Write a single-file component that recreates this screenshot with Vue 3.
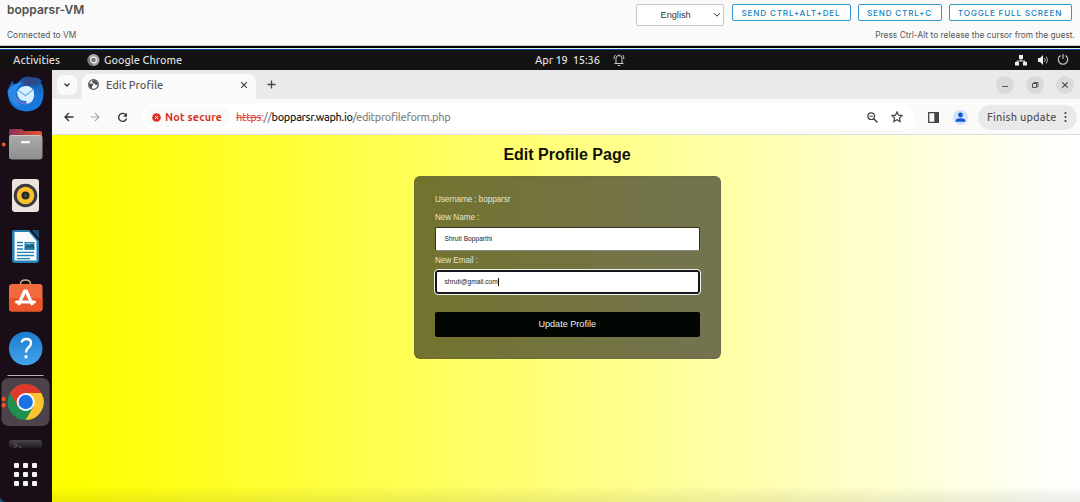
<script setup>
import { ref } from 'vue'

const username = 'bopparsr'
const name = ref('Shruti Bopparthi')
const email = ref('shruti@gmail.com')
const dots = [0, 1, 2, 3, 4, 5, 6, 7, 8]
</script>

<template>
  <div class="screen">
    <header class="vm">
      <div class="vm-left">
        <h1>bopparsr-VM</h1>
        <p><span>Connected to VM</span></p>
      </div>
      <div class="vm-right">
        <div class="vm-actions">
          <div class="select">
            <span>English</span>
            <svg width="8" height="6" viewBox="0 0 8 6"><path d="M1 1.2l3 3 3-3" fill="none" stroke="#333" /></svg>
          </div>
          <button class="b1"><span>SEND CTRL+ALT+DEL</span></button>
          <button class="b2"><span>SEND CTRL+C</span></button>
          <button class="b3"><span>TOGGLE FULL SCREEN</span></button>
        </div>
        <p class="hint">Press Ctrl-Alt to release the cursor from the guest.</p>
      </div>
    </header>
    <div class="rule"></div>

    <div class="topbar">
      <span class="activities">Activities</span>
      <svg class="tb-chrome" width="13" height="13" viewBox="0 0 13 13">
        <circle cx="6.5" cy="6" r="6" fill="#aaa" />
        <path d="M6.5 6L1.3 3A6 6 0 0 0 6 12z" fill="#777" />
        <circle cx="6.5" cy="6" r="2.9" fill="#777" stroke="#eee" stroke-width="1.1" />
      </svg>
      <span class="app">Google Chrome</span>
      <span class="clock">Apr 19&nbsp; 15:36</span>
      <svg class="bell" width="12" height="13" viewBox="0 0 12 13" fill="none" stroke="#ccc">
        <path d="M1.5 9.500h9M3 9.200V4.500a3 3 0 0 1 6 0v4.700M6 .5v1M4.800 11.500h2.400M1.200 5Q.8 2.500 2.400 .9M10.800 5Q11.200 2.500 9.600 .9" />
      </svg>
      <svg class="net" width="12" height="11" viewBox="0 0 12 11">
        <path d="M6 3v3M2 8V6h8v2" fill="none" stroke="#eee" />
        <path d="M4 0h4v4H4zM0 7h4v3.5H0zM8 7h4v3.5H8z" fill="#eee" />
      </svg>
      <svg class="vol" width="12" height="12" viewBox="0 0 12 12">
        <path d="M1 4h2l3-3v10L3 8H1z" fill="#eee" />
        <path d="M7.5 4q1.4 2 0 4M9.3 2.5q2.4 3.5 0 7" fill="none" stroke="#aaa" />
      </svg>
      <svg class="power" width="12" height="12" viewBox="0 0 12 12" fill="none" stroke="#ccc" stroke-width="1.1">
        <path d="M3.6 1.500a4.700 4.700 0 1 0 4.800 0M6 0v5" />
      </svg>
    </div>

    <div class="desktop">
      <aside class="dock">
        <svg width="52" height="432" viewBox="0 70 52 432">
          <defs>
            <linearGradient id="bird" x1="0" y1="0" x2="0" y2="1"><stop offset="0" stop-color="#174e96" /><stop offset=".55" stop-color="#1878d8" /><stop offset="1" stop-color="#1977df" /></linearGradient>
            <linearGradient id="tab" x1="0" y1="0" x2="1" y2="0"><stop offset="0" stop-color="#872f5b" /><stop offset="1" stop-color="#ec5428" /></linearGradient>
            <linearGradient id="folder" x1="0" y1="0" x2="0" y2="1"><stop offset="0" stop-color="#ababab" /><stop offset="1" stop-color="#8e8e8e" /></linearGradient>
            <linearGradient id="help" x1="0" y1="0" x2="0" y2="1"><stop offset="0" stop-color="#1b7dce" /><stop offset="1" stop-color="#43a4ea" /></linearGradient>
            <linearGradient id="term" x1="0" y1="0" x2="0" y2="1"><stop offset="0" stop-color="#494548" /><stop offset="1" stop-color="#211920" /></linearGradient>
          </defs>
          <!-- mail -->
          <path d="M7.500 91Q9 86 12.500 80.500Q13 85 17 84Q21 77 27 76.500L34 77.500Q39 77 42 81L40.500 82Q44 87 43.500 94Q43 111 26 111.500Q8 110 7.500 91z" fill="url(#bird)" />
          <path d="M8 91Q12 83 23 82L18 87Q12 98 21 107Q8 102 8 91z" fill="#2b8ae8" />
          <path d="M22 82Q25 76 34 78Q40 80 38 84L27 86z" fill="#324886" />
          <path d="M17 92Q20 85 28 86Q35 88 34 96Q33 104 25 104L27 101Q18 102 17 92z" fill="#d9efff" />
          <path d="M18 90l7.500 5.500 8-6" fill="none" stroke="#73b7ec" stroke-width="1.500" />
          <path d="M15 96Q17 103 27 104" fill="none" stroke="#806ed0" stroke-width="1.500" />
          <!-- files -->
          <path d="M9 131q0-2 2-2h10q2 0 3 2h16q2 0 2 2v12H9z" fill="url(#tab)" />
          <rect x="9" y="135" width="33.500" height="24.500" rx="3" fill="url(#folder)" />
          <path d="M10.500 135.500h30" stroke="#d9d9d9" stroke-width=".7" />
          <rect x="21" y="141" width="9" height="2.300" rx=".6" fill="#f7f7f7" />
          <circle cx="3.700" cy="144.500" r="2" fill="#e95420" />
          <!-- music -->
          <rect x="12" y="179" width="27" height="33" rx="3" fill="#e9e4dd" />
          <circle cx="25.500" cy="195.500" r="11.800" fill="#3a3b3e" />
          <circle cx="25.500" cy="195.500" r="8.800" fill="#fbc02c" />
          <circle cx="25.500" cy="195.500" r="4" fill="#292a2c" />
          <circle cx="25.500" cy="195.500" r="1.200" fill="#5b5b5b" />
          <!-- writer -->
          <path d="M14 230h15l10 11v19q0 3-3 3H15q-3 0-3-3v-28q0-2 2-2z" fill="#2580b5" />
          <path d="M14.500 232H29l7.500 9v19.500h-22z" fill="#f8fbfd" />
          <path d="M31.500 230h7.500v8.500z" fill="#174e70" />
          <path d="M17 242.500h6M17 245.700h6M17 249h6M17 252.300h17M17 255.500h17M17 258.600h13" stroke="#247fb4" stroke-width="1.300" />
          <path d="M24.500 242h10v8h-10z" fill="#277ea7" />
          <path d="M25 248.500l3-3 2 2 2-3 2 4" fill="none" stroke="#0d3c59" />
          <path d="M25.500 243h8v1h-8z" fill="#8fc7e4" />
          <!-- software -->
          <path d="M20.500 286v-2q0-4 5-4t5 4v2" fill="none" stroke="#c8aa83" stroke-width="1.500" />
          <rect x="9" y="284" width="33.500" height="27.500" rx="3" fill="#f06a3e" />
          <path d="M9 298h33.500v10.500q0 3-3 3H12q-3 0-3-3z" fill="#ea5529" />
          <path d="M18.500 305l6.200-14h1.600l6.200 14" fill="none" stroke="#fff" stroke-width="3.200" stroke-linejoin="round" />
          <path d="M16.500 302h18" stroke="#fff" stroke-width="3" stroke-linecap="round" />
          <!-- help -->
          <circle cx="25.700" cy="348.500" r="16.800" fill="url(#help)" />
          <path d="M21.500 342.500q1-3.500 5-3.500 4.500 0 4.500 4 0 2.500-2.500 4.500-2.500 2-2.500 5" fill="none" stroke="#fff" stroke-width="2.300" />
          <circle cx="26" cy="356.700" r="1.700" fill="#fff" />
          <path d="M7.500 375.500h36" stroke="#b8b4b7" stroke-width="1.200" />
          <!-- browser -->
          <rect x="1.500" y="378" width="48" height="48" rx="7" fill="#4b4349" />
          <circle cx="3.700" cy="399" r="2.200" fill="#e95420" /><circle cx="3.700" cy="405.300" r="2.200" fill="#e95420" />
          <circle cx="25.700" cy="402" r="18" fill="#1e9150" />
          <path d="M25.700 402L10.100 393A18 18 0 0 1 41.300 393z" fill="#df382c" />
          <path d="M25.700 393H41.300A18 18 0 0 1 25.700 420L33.500 406.500z" fill="#fcc42f" />
          <path d="M10.100 393L17.900 406.500 25.700 393z" fill="#df382c" />
          <circle cx="25.700" cy="402" r="9" fill="#fff" />
          <circle cx="25.700" cy="402" r="7.200" fill="#1b72e5" />
          <!-- terminal -->
          <path d="M9 448v-5q0-3 3-3h27q3 0 3 3v5z" fill="url(#term)" />
          <path d="M14 443.500l3.500 2-3.500 2M19 447h2.500" fill="none" stroke="#77717a" stroke-width=".8" />
          <rect v-for="d in dots" :key="d" :x="14 + (d % 3) * 9" :y="463 + Math.floor(d / 3) * 9" width="5" height="5" rx="1" fill="#f4f4f4" />
          <path d="M0 497q1 4 5 5H0z" fill="#17567c" />
        </svg>
      </aside>

      <main class="browser">
        <div class="tabs">
          <span class="menu"><svg width="8" height="6" viewBox="0 0 8 6"><path d="M1.500 1.500L4 4l2.500-2.500" fill="none" stroke="#333" stroke-width="1.300" /></svg></span>
          <div class="tab">
            <svg width="11" height="11" viewBox="0 0 11 11">
              <circle cx="5.500" cy="5.500" r="4.800" fill="#fff" stroke="#50545a" stroke-width="1.300" />
              <path d="M1 4.500h3l1.500 1.300L4 7.500v2.700Q1 8.500 1 4.500zM5 1q4-.2 5 4L8 6.500 6.500 4.500H5L4 3z" fill="#50545a" />
            </svg>
            <span>Edit Profile</span>
            <svg class="close" width="8" height="8" viewBox="0 0 8 8"><path d="M1.200 1.200l5.600 5.600M6.800 1.200L1.200 6.800" stroke="#444" stroke-width="1.200" /></svg>
          </div>
          <svg class="plus" width="9" height="9" viewBox="0 0 9 9"><path d="M4.500.5v8M.5 4.500h8" stroke="#444" stroke-width="1.300" /></svg>
          <div class="winctl">
            <i><svg width="8" height="8" viewBox="0 0 8 8"><path d="M1 5.500h6" stroke="#555" /></svg></i>
            <i><svg width="8" height="8" viewBox="0 0 8 8"><path d="M1.500 2.500h4v4h-4zM3 2.500v-1h4v4H5.500" fill="none" stroke="#555" /></svg></i>
            <i><svg width="8" height="8" viewBox="0 0 8 8"><path d="M1.300 1.300l5.400 5.400M6.700 1.300L1.300 6.700" stroke="#444" stroke-width="1.100" /></svg></i>
          </div>
        </div>

        <div class="toolbar">
          <svg class="back" width="10" height="10" viewBox="0 0 10 10" fill="none" stroke="#333" stroke-width="1.300"><path d="M9.500 5H1.300M5 1L1 5l4 4" /></svg>
          <svg class="fwd" width="10" height="10" viewBox="0 0 10 10" fill="none" stroke="#aaa" stroke-width="1.200"><path d="M.5 5h8.200M5 1l4 4-4 4" /></svg>
          <svg class="reload" width="11" height="11" viewBox="0 0 11 11"><path d="M9.200 3.500A4 4 0 1 0 9.500 6.500" fill="none" stroke="#333" stroke-width="1.400" /><path d="M10 .8v4H6z" fill="#333" /></svg>
          <div class="address">
            <div class="chip">
              <svg width="9" height="9" viewBox="0 0 9 9"><circle cx="4.500" cy="4.500" r="4.300" fill="#d93025" /><path d="M3 3l3 3M6 3L3 6" stroke="#fff" /></svg>
              <span>Not secure</span>
            </div>
            <div class="url"><s>https</s><span class="dim">://</span><span class="host">bopparsr.waph.io</span><span class="path">/editprofileform.php</span></div>
            <svg class="mag" width="11" height="11" viewBox="0 0 11 11" fill="none" stroke="#444"><circle cx="4.200" cy="4.200" r="3.300" stroke-width="1.200" /><path d="M6.700 6.700l3.800 3.800" stroke-width="1.500" /><path d="M2.500 4.200h3.400" /></svg>
            <svg class="star" width="12" height="12" viewBox="0 0 12 12"><path d="M6 .9l1.500 3.300 3.600.4-2.700 2.400.8 3.600L6 8.800l-3.200 1.800.8-3.600L.9 4.600l3.600-.4z" fill="none" stroke="#444" stroke-width="1.200" /></svg>
          </div>
          <svg class="panel" width="11" height="11" viewBox="0 0 11 11"><path d="M.7.7h9.600v9.600H.7z" fill="none" stroke="#444" stroke-width="1.300" /><path d="M6.300 1h4v9h-4z" fill="#444" /></svg>
          <svg class="avatar" width="15" height="15" viewBox="0 0 15 15"><circle cx="7.500" cy="7.500" r="7.500" fill="#d3e3fd" /><circle cx="7.500" cy="5" r="2.400" fill="#1557ce" /><path d="M2.700 11.700V10.500Q3 8.200 7.500 8.200T12.300 10.500v1.200z" fill="#1557ce" /></svg>
          <div class="finish"><span>Finish update</span><svg width="3" height="12" viewBox="0 0 3 12" fill="#444"><circle cx="1.500" cy="2" r="1.100" /><circle cx="1.500" cy="6" r="1.100" /><circle cx="1.500" cy="10" r="1.100" /></svg></div>
        </div>

        <section class="page">
          <h2><span>Edit Profile Page</span></h2>
          <form class="card" @submit.prevent>
            <p class="user">Username : {{ username }}</p>
            <label class="l1">New Name :</label>
            <div class="field">{{ name }}</div>
            <label class="l2">New Email :</label>
            <div class="field focus">{{ email }}<i class="caret"></i></div>
            <button class="submit">Update Profile</button>
          </form>
        </section>
      </main>
    </div>
  </div>
</template>

<style>
body { overflow: hidden; }
</style>

<style scoped>
* { box-sizing: border-box; }
svg { display: block; flex: none; }
h1, h2, p { margin: 0; }
span, p, label { white-space: nowrap; }
.screen { width: 1080px; height: 502px; overflow: hidden; display: flex; flex-direction: column; font-family: Ubuntu, "Noto Sans", sans-serif; }
.vm { height: 46px; flex: none; background: #fafafa; border-bottom: 1px solid #ccc; display: flex; justify-content: space-between; font-family: Metropolis, Inter, sans-serif; color: #555; }
.vm-left { padding: 2px 0 0 7px; }
.vm-left h1 { font-size: 12px; line-height: 15px; font-weight: 600; color: #505050; letter-spacing: 0; }
.vm-left p { font-size: 8.300px; line-height: 12px; margin-top: 12px; letter-spacing: .06px; }
.vm-right { padding-right: 5px; }
.vm-actions { display: flex; height: 28px; padding: 4px 4px 0 0; justify-content: flex-end; }
.select { width: 88px; height: 22px; margin-right: 8px; border: 1px solid #c8c8c8; border-radius: 2px; background: #fff; display: flex; align-items: center; justify-content: space-between; padding: 0 2px 0 24px; font-size: 9.200px; color: #333; font-family: "Liberation Sans", sans-serif; }
.vm-actions button { height: 17px; padding: 0; border: 1px solid #3597cb; border-radius: 2px; background: #fff; color: #1682bd; font-family: Metropolis, Inter, sans-serif; font-size: 8.200px; line-height: 16px; font-weight: 500; letter-spacing: .78px; }
.vm-actions .b1 { width: 119px; margin-right: 7px; }
.vm-actions .b2 { width: 84px; margin-right: 7px; }
.vm-actions .b3 { width: 123px; margin-right: -.5px; }
.hint { text-align: right; font-size: 8.300px; line-height: 12px; margin-top: 1px; letter-spacing: .04px; }
.rule { height: 4px; flex: none; background: linear-gradient(#000 0 2px, #e6efec 2px 3px, #0749a9 3px 4px); }
.topbar { height: 20px; flex: none; background: #131313; color: #dedede; display: flex; align-items: center; padding: 0 11px 0 13px; font-size: 11px; line-height: 20px; font-weight: 500; }
.activities { width: 74px; letter-spacing: .02px; }
.tb-chrome { margin-right: 4px; }
.app { width: 431px; letter-spacing: -.02px; }
.clock { width: 78px; letter-spacing: -.08px; }
.net { margin-left: auto; margin-right: 10px; }
.vol { margin-right: 8px; }
.desktop { flex: 1; display: flex; min-height: 0; }
.dock { width: 52px; background: #190d17; }
.browser { flex: 1; display: flex; flex-direction: column; background: #fafafa; }
.tabs { height: 30px; flex: none; background: #eaeaea; display: flex; align-items: center; padding: 0 6px 0 5px; border-bottom: 1px solid #fafafa; }
.menu { width: 20px; height: 20px; border-radius: 6px; background: #fafafa; display: grid; place-items: center; margin: 1px 5px 0 0; }
.tab { width: 174px; height: 26px; margin-top: 4px; background: #fafafa; border-radius: 8px 8px 0 0; display: flex; align-items: center; padding: 0 8px 4px 6px; font-size: 11px; font-weight: 500; color: #555; letter-spacing: .03px; }
.tab span { margin-left: 7px; }
.close { margin-left: auto; }
.plus { margin-left: 11px; }
.winctl { display: flex; gap: 12px; margin-left: auto; }
.winctl i { width: 18px; height: 18px; margin-top: 1px; border-radius: 50%; background: #dadada; display: grid; place-items: center; }
.toolbar { height: 35px; flex: none; display: flex; align-items: center; padding: 0 3px 0 12px; border-bottom: 1px solid #dedede; color: #555; font-size: 11px; font-weight: 500; }
.back, .fwd { margin-right: 16px; }
.reload { margin: 0 -1px 0 1px; }
.address { width: 773px; height: 26px; margin-left: 15px; background: #fff; border-radius: 13px; display: flex; align-items: center; padding: 0 12px 0 3px; }
.chip { width: 85px; height: 20px; border-radius: 10px; background: #fafafa; display: flex; align-items: center; padding-left: 7px; color: #d93025; font-weight: 600; font-size: 10.800px; letter-spacing: .18px; }
.chip span { margin-left: 4px; }
.url { margin-left: 6px; white-space: nowrap; letter-spacing: -.34px; }
.url s { color: #df514a; }
.host { color: #222; }
.path, .dim { color: #858585; }
.mag { margin-left: auto; margin-right: 13px; }
.panel { margin-left: 13px; }
.avatar { margin-left: 14px; }
.finish { width: 99px; height: 25px; border-radius: 13px; background: #e9e9e9; margin-left: auto; display: flex; align-items: center; padding: 0 10px 0 9px; justify-content: space-between; letter-spacing: .15px; }
.page { flex: 1; background: linear-gradient(transparent 350px, rgba(60, 60, 40, .1) 367px), linear-gradient(90deg, #ff0 2%, #fffffb 97%, #fff 100%); font-family: "Liberation Sans", Arial, sans-serif; padding: 10px 0 0 362px; }
.page h2 { width: 306px; text-align: center; font-size: 16px; line-height: 20px; color: #111108; }
.card { width: 306.500px; height: 183px; margin-top: 11px; padding: 17px 20px 0; border-radius: 6px; background: rgba(8, 8, 15, .57); border: 1px solid rgba(90, 90, 65, .25); display: flex; flex-direction: column; color: #e4e4d4; font-size: 8.200px; letter-spacing: -.08px; }
.user, .card label { line-height: 12px; }
.l1 { margin-top: 6px; }
.l2 { margin-top: 4px; }
.field { height: 24px; margin-top: 2.500px; background: #fff; border: 1px solid #33331f; border-bottom-color: #888; border-radius: 2px; font-size: 6.600px; line-height: 22px; padding-left: 8.500px; color: #222; display: flex; align-items: center; letter-spacing: .02px; }
.l2 + .focus { margin-top: 3px; }
.focus { border: 2px solid #15151a; border-radius: 3px; outline: 1px solid #f2f2ee; padding-left: 7.500px; letter-spacing: .03px; }
.caret { width: 1px; height: 8px; background: #111; }
.submit { height: 25px; margin-top: 18px; border: 0; border-radius: 2px; background: #020704; color: #eee; font: 9.100px "Liberation Sans", Arial, sans-serif; padding: 0 0 1px; }
</style>
